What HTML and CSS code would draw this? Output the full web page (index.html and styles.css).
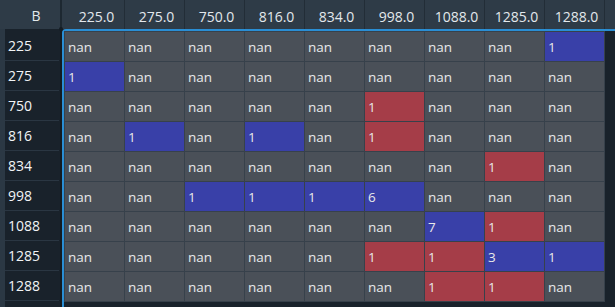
FILE: index.html
```html
<!DOCTYPE html>
<html>
<head>
<meta charset="utf-8">
<link rel="stylesheet" href="styles.css">
</head>
<body>
<div class="app">
  <div class="hdr">
    <div class="corner">B<span class="knob"></span></div>
    <div class="colheads">
      <div class="ch">225.0</div><div class="ch">275.0</div><div class="ch">750.0</div>
      <div class="ch">816.0</div><div class="ch">834.0</div><div class="ch">998.0</div>
      <div class="ch">1088.0</div><div class="ch">1285.0</div><div class="ch">1288.0</div>
    </div>
  </div>
  <div class="main">
    <div class="rowheads">
      <div class="rh">225</div><div class="rh">275</div><div class="rh">750</div>
      <div class="rh">816</div><div class="rh">834</div><div class="rh">998</div>
      <div class="rh">1088</div><div class="rh">1285</div><div class="rh">1288</div>
    </div>
    <div class="body">
      <div class="grid">
        <div class="c">nan</div><div class="c">nan</div><div class="c">nan</div><div class="c">nan</div><div class="c">nan</div><div class="c">nan</div><div class="c">nan</div><div class="c">nan</div><div class="c b">1</div>

        <div class="c b">1</div><div class="c">nan</div><div class="c">nan</div><div class="c">nan</div><div class="c">nan</div><div class="c">nan</div><div class="c">nan</div><div class="c">nan</div><div class="c">nan</div>

        <div class="c">nan</div><div class="c">nan</div><div class="c">nan</div><div class="c">nan</div><div class="c">nan</div><div class="c r">1</div><div class="c">nan</div><div class="c">nan</div><div class="c">nan</div>

        <div class="c">nan</div><div class="c b">1</div><div class="c">nan</div><div class="c b">1</div><div class="c">nan</div><div class="c r">1</div><div class="c">nan</div><div class="c">nan</div><div class="c">nan</div>

        <div class="c">nan</div><div class="c">nan</div><div class="c">nan</div><div class="c">nan</div><div class="c">nan</div><div class="c">nan</div><div class="c">nan</div><div class="c r">1</div><div class="c">nan</div>

        <div class="c">nan</div><div class="c">nan</div><div class="c b">1</div><div class="c b">1</div><div class="c b">1</div><div class="c b">6</div><div class="c">nan</div><div class="c">nan</div><div class="c">nan</div>

        <div class="c">nan</div><div class="c">nan</div><div class="c">nan</div><div class="c">nan</div><div class="c">nan</div><div class="c">nan</div><div class="c b">7</div><div class="c r">1</div><div class="c">nan</div>

        <div class="c">nan</div><div class="c">nan</div><div class="c">nan</div><div class="c">nan</div><div class="c">nan</div><div class="c r">1</div><div class="c r">1</div><div class="c b">3</div><div class="c b">1</div>

        <div class="c">nan</div><div class="c">nan</div><div class="c">nan</div><div class="c">nan</div><div class="c">nan</div><div class="c">nan</div><div class="c r">1</div><div class="c r">1</div><div class="c">nan</div>
      </div>
    </div>
  </div>
</div>
</body>
</html>
```

FILE: styles.css
```css
html, body {
  margin: 0;
  padding: 0;
  background: #19222b;
  overflow: hidden;
}
.app {
  width: 615px;
  height: 307px;
  display: flex;
  flex-direction: column;
  font-family: "Open Sans", "Noto Sans", sans-serif;
  font-size: 13.5px;
  color: #e6e8ea;
}
.hdr {
  display: flex;
  height: 29px;
  background: #2e3b47;
  flex: none;
}
.corner {
  position: relative;
  width: 60px;
  border-right: 2px solid #1d2831;
  box-sizing: content-box;
  display: flex;
  align-items: center;
  justify-content: center;
  padding-left: 0;
  text-indent: 12px;
  font-size: 14px;
  color: #e3e8ec;
  padding-top: 2px;
  box-sizing: border-box;
  width: 62px;
}
.knob {
  position: absolute;
  right: -3px;
  bottom: -2px;
  width: 4px;
  height: 4px;
  border-radius: 50%;
  background: #151d24;
}
.colheads {
  display: flex;
  padding-left: 3px;
}
.ch {
  width: 59px;
  border-right: 1px solid #222d37;
  display: flex;
  align-items: center;
  justify-content: center;
  padding-top: 3px;
  box-sizing: border-box;
  width: 60px;
  padding-left: 4px;
  font-size: 14px;
  color: #e3e8ec;
}
.main {
  display: flex;
  flex: 1;
  min-height: 0;
}
.rowheads {
  width: 62px;
  flex: none;
  box-sizing: border-box;
  border-left: 5px solid #2b3844;
  border-right: 2px solid #131b22;
  padding-right: 1px;
  padding-top: 2px;
  display: flex;
  flex-direction: column;
}
.rh {
  height: 29px;
  border-bottom: 1px solid #2a3642;
  display: flex;
  align-items: center;
  padding-left: 3px;
  font-size: 14px;
  color: #f2f4f6;
  flex: none;
}
.body {
  flex: 1;
  border-top: 2px solid #2a8ed4;
  border-left: 2px solid #2a8ed4;
  border-top-left-radius: 4px;
  background: #19222b;
}
.grid {
  display: grid;
  grid-template-columns: repeat(9, 59px);
  grid-template-rows: repeat(9, 29px);
  gap: 1px;
  padding: 1px;
  background: #37414b;
  width: max-content;
}
.c {
  background: #4a5058;
  display: flex;
  align-items: center;
  padding-left: 3px;
  color: #e8e9ea;
}
.c.b { background: #3940a8; }
.c.r { background: #a53d48; }
```
